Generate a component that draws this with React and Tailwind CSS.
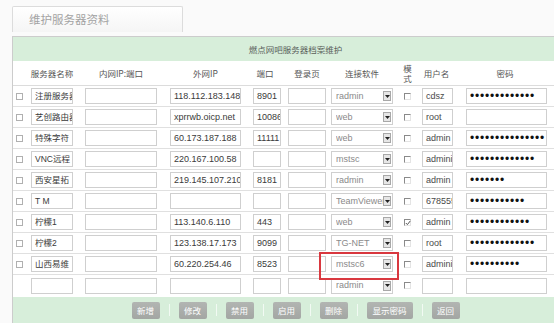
import React from "react";

const rows = [
  { chk: true, name: "注册服务器", ext: "118.112.183.148", port: "8901", soft: "radmin", mode: false, user: "cdsz", pwd: 13 },
  { chk: true, name: "艺创路由器", ext: "xprrwb.oicp.net", port: "10086", soft: "web", mode: false, user: "root", pwd: 0 },
  { chk: true, name: "特殊字符", ext: "60.173.187.188", port: "11111", soft: "web", mode: false, user: "admin", pwd: 15 },
  { chk: true, name: "VNC远程", ext: "220.167.100.58", port: "", soft: "mstsc", mode: false, user: "administrator", pwd: 13 },
  { chk: true, name: "西安星拓", ext: "219.145.107.210", port: "8181", soft: "radmin", mode: false, user: "admin", pwd: 7 },
  { chk: true, name: "T M", ext: "", port: "", soft: "TeamViewer", mode: false, user: "678555555", pwd: 11 },
  { chk: true, name: "柠檬1", ext: "113.140.6.110", port: "443", soft: "web", mode: true, user: "admin", pwd: 12 },
  { chk: true, name: "柠檬2", ext: "123.138.17.173", port: "9099", soft: "TG-NET", mode: false, user: "root", pwd: 13 },
  { chk: true, name: "山西易维", ext: "60.220.254.46", port: "8523", soft: "mstsc6", mode: false, user: "administrator", pwd: 10 },
  { chk: false, name: "", ext: "", port: "", soft: "radmin", mode: false, user: "", pwd: 0 },
];

function Box({ className, children }) {
  return (
    <div
      className={
        "h-[16px] border border-[#cfcfcf] bg-white pl-[3px] flex items-center overflow-hidden whitespace-nowrap leading-none " +
        className
      }
    >
      {children}
    </div>
  );
}

function LeftCheck() {
  return <div className="w-[7px] h-[7px] border border-[#b0b0b0] bg-white" />;
}

function ModeCheck({ checked }) {
  return (
    <div className="w-[7px] h-[7px] border-l border-t border-[#8a8a8a] border-r border-b border-r-[#e4e4e4] border-b-[#e4e4e4] bg-white relative">
      {checked && (
        <svg className="absolute left-0 top-0" width="6" height="6" viewBox="0 0 6 6">
          <path d="M0.8 3 L2.4 4.6 L5.4 0.8" fill="none" stroke="#555" strokeWidth="1" />
        </svg>
      )}
    </div>
  );
}

function Select({ value }) {
  return (
    <div className="w-[62px] h-[16px] border border-[#cfcfcf] bg-white flex items-center pl-[4px] pr-[1px] text-[9px] leading-none text-[#8a8a8a]">
      <div className="flex-1 min-w-0 overflow-hidden whitespace-nowrap">{value}</div>
      <div className="w-[8px] h-[10px] border border-[#a8a8a8] bg-[#e6e6e6] flex items-center justify-center shrink-0">
        <svg width="5" height="3" viewBox="0 0 5 3">
          <path d="M0 0 L5 0 L2.5 3 Z" fill="#222" />
        </svg>
      </div>
    </div>
  );
}

function Row({ r, last }) {
  return (
    <div className={"flex items-center h-[21px] " + (last ? "" : "border-b border-[#e0e0e0]")}>
      <div className="w-[14px] shrink-0 pl-[3px]">{r.chk && <LeftCheck />}</div>
      <div className="w-[52px] shrink-0 pl-[4px]">
        <Box className="w-[42px] text-[8.5px] text-[#3a3a3a]">{r.name}</Box>
      </div>
      <div className="w-[84px] shrink-0 pl-[6px]">
        <Box className="w-[72px]" />
      </div>
      <div className="w-[84px] shrink-0 pl-[7px]">
        <Box className="w-[71px] text-[9px] text-[#3a3a3a]">{r.ext}</Box>
      </div>
      <div className="w-[37px] shrink-0 pl-[6px]">
        <Box className="w-[28px] text-[9px] text-[#3a3a3a]">{r.port}</Box>
      </div>
      <div className="w-[45px] shrink-0 pl-[4px]">
        <Box className="w-[38px]" />
      </div>
      <div className="w-[69px] shrink-0 pl-[2px]">
        <Select value={r.soft} />
      </div>
      <div className="w-[18px] shrink-0 pl-[6px]">
        <ModeCheck checked={r.mode} />
      </div>
      <div className="w-[43px] shrink-0 pl-[6px]">
        <Box className="w-[31px] text-[9px] text-[#4a4a4a]">{r.user}</Box>
      </div>
      <div className="w-[101px] shrink-0 pl-[7px]">
        <Box className="w-[81px] pl-[3px] text-[12px] tracking-[0.8px] text-[#111]">
          {"•".repeat(r.pwd)}
        </Box>
      </div>
    </div>
  );
}

function Head({ className, children }) {
  return (
    <div className={"flex justify-center whitespace-nowrap " + className}>{children}</div>
  );
}

function Btn({ w, children }) {
  return (
    <div
      className={
        "h-[17px] rounded-[2px] bg-gradient-to-b from-[#b2b5b2] to-[#a3a6a3] text-white text-[8.5px] flex items-center justify-center " +
        w
      }
    >
      {children}
    </div>
  );
}

function Sep() {
  return <div className="w-px h-[12px] bg-[#f2faf3] mx-[9px]" />;
}

export default function App() {
  return (
    <div className="w-[554px] h-[323px] overflow-hidden bg-[#fafafa] relative font-['Liberation_Sans','Noto_Sans_CJK_SC',sans-serif]">
      <div className="h-[36px] pt-[6px] pl-[12px]">
        <div className="w-[171px] h-[26px] border border-b-0 border-[#dcdcdc] rounded-t-[2px] bg-gradient-to-b from-white to-[#f5f5f5] flex items-center pl-[16px] text-[11.5px] text-[#a3a3a3] font-['Noto_Sans_CJK_SC',sans-serif]">
          维护服务器资料
        </div>
      </div>
      <div className="ml-[12px] w-[566px] border-l border-t border-[#cccccc] bg-white">
        <div className="h-[24px] bg-[#d7eeda] flex items-center justify-center text-[8.5px] text-[#5a5f5a] font-['Noto_Sans_CJK_SC',sans-serif]">
          燃点网吧服务器档案维护
        </div>
        <div className="flex items-center h-[25px] border-b border-[#dcdcdc] text-[8.5px] text-[#555] font-['Noto_Sans_CJK_SC',sans-serif]">
          <div className="w-[14px] shrink-0" />
          <div className="w-[52px] shrink-0 pl-[4px]">
            <Head className="w-[42px]">服务器名称</Head>
          </div>
          <div className="w-[84px] shrink-0 pl-[6px]">
            <Head className="w-[72px]">内网IP:端口</Head>
          </div>
          <div className="w-[84px] shrink-0 pl-[7px]">
            <Head className="w-[71px]">外网IP</Head>
          </div>
          <div className="w-[37px] shrink-0 pl-[6px]">
            <Head className="w-[24px]">端口</Head>
          </div>
          <div className="w-[45px] shrink-0 pl-[4px]">
            <Head className="w-[38px]">登录页</Head>
          </div>
          <div className="w-[69px] shrink-0 pl-[2px]">
            <Head className="w-[62px]">连接软件</Head>
          </div>
          <div className="w-[18px] shrink-0 pl-[5px]">
            <div className="w-[9px] flex flex-col items-center leading-[10px]">
              <span>模</span>
              <span>式</span>
            </div>
          </div>
          <div className="w-[43px] shrink-0 pl-[5px]">
            <Head className="w-[31px]">用户名</Head>
          </div>
          <div className="w-[101px] shrink-0 pl-[7px]">
            <Head className="w-[78px]">密码</Head>
          </div>
        </div>
        {rows.map((r, i) => (
          <Row key={i} r={r} last={i === rows.length - 1} />
        ))}
        <div className="h-[26px] mt-[1px] bg-[#d7eeda] flex items-center justify-center font-['Noto_Sans_CJK_SC',sans-serif]">
          <Btn w="w-[28px]">新增</Btn>
          <Sep />
          <Btn w="w-[28px]">修改</Btn>
          <Sep />
          <Btn w="w-[28px]">禁用</Btn>
          <Sep />
          <Btn w="w-[28px]">启用</Btn>
          <Sep />
          <Btn w="w-[28px]">删除</Btn>
          <Sep />
          <Btn w="w-[46px]">显示密码</Btn>
          <Sep />
          <Btn w="w-[28px]">返回</Btn>
        </div>
      </div>
      <div className="absolute left-[319px] top-[252px] w-[80px] h-[28px] border-2 border-[#d9383f]" />
    </div>
  );
}
